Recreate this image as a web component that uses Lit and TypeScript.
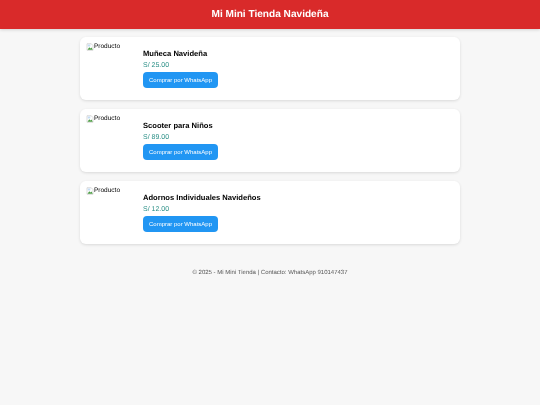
import {css, html, LitElement} from 'lit';
import {customElement} from 'lit/decorators.js';

const products = [
  {name: 'Muñeca Navideña', price: 'S/ 25.00'},
  {name: 'Scooter para Niños', price: 'S/ 89.00'},
  {name: 'Adornos Individuales Navideños', price: 'S/ 12.00'},
];

@customElement('app-root')
export class AppRoot extends LitElement {
  static styles = css`
    :host {
      display: block;
      min-height: 405px;
      background: #f7f7f7;
      font-family: "Liberation Sans", Arial, sans-serif;
      color: #000;
      text-rendering: geometricPrecision;
    }

    .top {
      height: 28.5px;
      display: flex;
      align-items: center;
      justify-content: center;
      background: #d92a2a;
      box-shadow: 0 1px 3px rgba(0, 0, 0, 0.15);
      color: #fff;
      font-size: 10.1px;
      font-weight: 700;
      will-change: opacity;
    }

    .list {
      width: 380px;
      margin: 0 auto;
      padding-top: 8.5px;
      display: flex;
      flex-direction: column;
      gap: 9px;
    }

    .card {
      height: 63px;
      box-sizing: border-box;
      padding: 6px;
      display: flex;
      gap: 12px;
      background: #fff;
      border-radius: 6px;
      box-shadow: 0 1px 3px rgba(0, 0, 0, 0.12);
      will-change: opacity;
    }

    .thumb {
      width: 45px;
      flex: none;
      display: flex;
      align-items: flex-start;
      font-size: 6.5px;
      line-height: 7px;
    }

    .thumb svg {
      flex: none;
      width: 8px;
      height: 8px;
    }

    .info {
      padding-top: 6px;
      display: flex;
      flex-direction: column;
      align-items: flex-start;
    }

    h2 {
      margin: 0;
      font-size: 7.6px;
      line-height: 10px;
      font-weight: 700;
    }

    .price {
      margin-top: 1.5px;
      font-size: 7px;
      line-height: 9px;
      color: #2a8f86;
    }

    .buy {
      margin-top: 2px;
      width: 75px;
      height: 16px;
      padding: 0;
      border: none;
      border-radius: 4px;
      background: #2196f3;
      color: #fff;
      font-family: inherit;
      font-size: 6px;
    }

    footer {
      margin-top: 25px;
      text-align: center;
      font-size: 6px;
      line-height: 9px;
      color: #555;
      will-change: opacity;
    }
  `;

  render() {
    return html`
      <div class="top">Mi Mini Tienda Navideña</div>
      <div class="list">
        ${products.map((item) => html`
          <div class="card">
            <div class="thumb">
              <svg viewBox="0 0 16 16" aria-hidden="true">
                <path d="M2 1.5h8.5L14 5v9.5H2z" fill="#fff" stroke="#b5b5b5"/>
                <path d="M3 13.5l3.5-5 2.5 2.5 2-2 2.5 4.5z" fill="#4f9e46"/>
                <path d="M3.5 3h5v4h-5z" fill="#c4dcf5"/>
              </svg>
              <span>Producto</span>
            </div>
            <div class="info">
              <h2>${item.name}</h2>
              <div class="price">${item.price}</div>
              <button class="buy" type="button">Comprar por WhatsApp</button>
            </div>
          </div>
        `)}
      </div>
      <footer>© 2025 - Mi Mini Tienda | Contacto: WhatsApp 910147437</footer>
    `;
  }
}
